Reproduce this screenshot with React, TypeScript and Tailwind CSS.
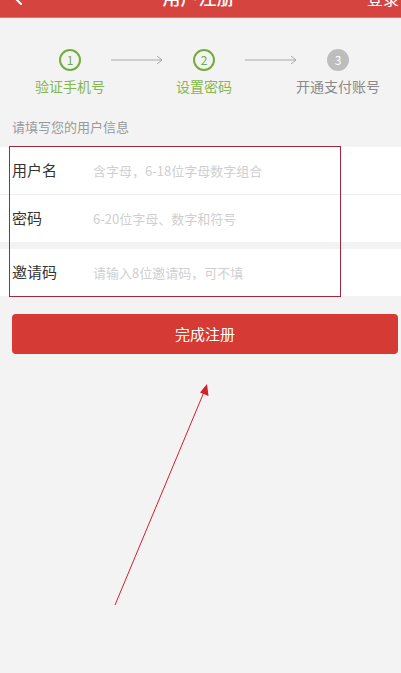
import { ChevronLeft } from 'lucide-react';

const steps = [
  { no: '1', label: '验证手机号', done: true },
  { no: '2', label: '设置密码', done: true },
  { no: '3', label: '开通支付账号', done: false },
];

const StepArrow = () => (
  <svg width="52" height="10" viewBox="0 0 52 10" className="shrink-0">
    <line x1="0" y1="5" x2="51" y2="5" stroke="#a9a9a9" strokeWidth="1" />
    <polyline points="46,1 51,5 46,9" fill="none" stroke="#a9a9a9" strokeWidth="1" />
  </svg>
);

const App = () => {
  return (
    <div className="relative h-[673px] w-[401px] overflow-hidden bg-[#f3f3f3] font-['Noto_Sans_CJK_SC','Noto_Sans',sans-serif]">
      {/* Header (scrolled mostly off screen) */}
      <div className="-mt-[22px] flex h-[40px] items-center justify-between border-b border-[#e4716b] bg-[#d5443f] pl-[6px] pr-[2px] text-white">
        <ChevronLeft className="h-6 w-6" strokeWidth={2} />
        <span className="text-[18px] font-medium">用户注册</span>
        <span className="text-[16px]">登录</span>
      </div>

      {/* Steps */}
      <div className="mt-[31px] flex items-center gap-[30px] pl-[59px]">
        {steps.map((s, i) => (
          <div key={s.no} className="flex items-center gap-[30px]">
            {s.done ? (
              <div className="flex h-[22px] w-[22px] items-center justify-center rounded-full border-2 border-[#74ad3d] text-[12px] leading-none text-[#74ad3d]">
                {s.no}
              </div>
            ) : (
              <div className="flex h-[22px] w-[22px] items-center justify-center rounded-full bg-[#bdbdbd] text-[12px] leading-none text-white">
                {s.no}
              </div>
            )}
            {i < steps.length - 1 && <StepArrow />}
          </div>
        ))}
      </div>
      <div className="mt-[5px] grid grid-cols-[134px_134px_134px] pl-[3px]">
        {steps.map((s) => (
          <div
            key={s.no}
            className={`text-center text-[14px] leading-[20px] ${s.done ? 'text-[#84b84c]' : 'text-[#8a8a8a]'}`}
          >
            {s.label}
          </div>
        ))}
      </div>

      <p className="mt-[22px] pl-[12px] text-[13px] leading-[18px] text-[#9a9a9a]">请填写您的用户信息</p>

      {/* Form */}
      <div className="relative mt-[11px]">
        <div className="bg-white">
          <div className="flex h-[48px] items-center border-b border-[#ededed] pl-[12px]">
            <span className="w-[81px] text-[15px] text-[#333]">用户名</span>
            <span className="text-[13px] text-[#cfcfcf]">含字母，6-18位字母数字组合</span>
          </div>
          <div className="flex h-[47px] items-center pl-[12px]">
            <span className="w-[81px] text-[15px] text-[#333]">密码</span>
            <span className="text-[13px] text-[#cfcfcf]">6-20位字母、数字和符号</span>
          </div>
        </div>
        <div className="mt-[7px] flex h-[47px] items-center bg-white pl-[12px]">
          <span className="w-[81px] text-[15px] text-[#333]">邀请码</span>
          <span className="text-[13px] text-[#cfcfcf]">请输入8位邀请码，可不填</span>
        </div>
        {/* annotation box */}
        <div className="pointer-events-none absolute -top-[1px] left-[9px] h-[151px] w-[332px] border border-[#a3263a]" />
      </div>

      <button className="mx-[12px] mt-[18px] flex h-[40px] w-[386px] items-center justify-center rounded-[4px] bg-[#d63a34] text-[15px] text-white">
        完成注册
      </button>

      {/* annotation arrow */}
      <svg className="pointer-events-none absolute left-0 top-0" width="401" height="673" viewBox="0 0 401 673">
        <line x1="115" y1="605" x2="204" y2="392" stroke="#d3202a" strokeWidth="1" />
        <polygon points="207,384 208.5,396 200,392.5" fill="#d3202a" />
      </svg>
    </div>
  );
};

export default App;
